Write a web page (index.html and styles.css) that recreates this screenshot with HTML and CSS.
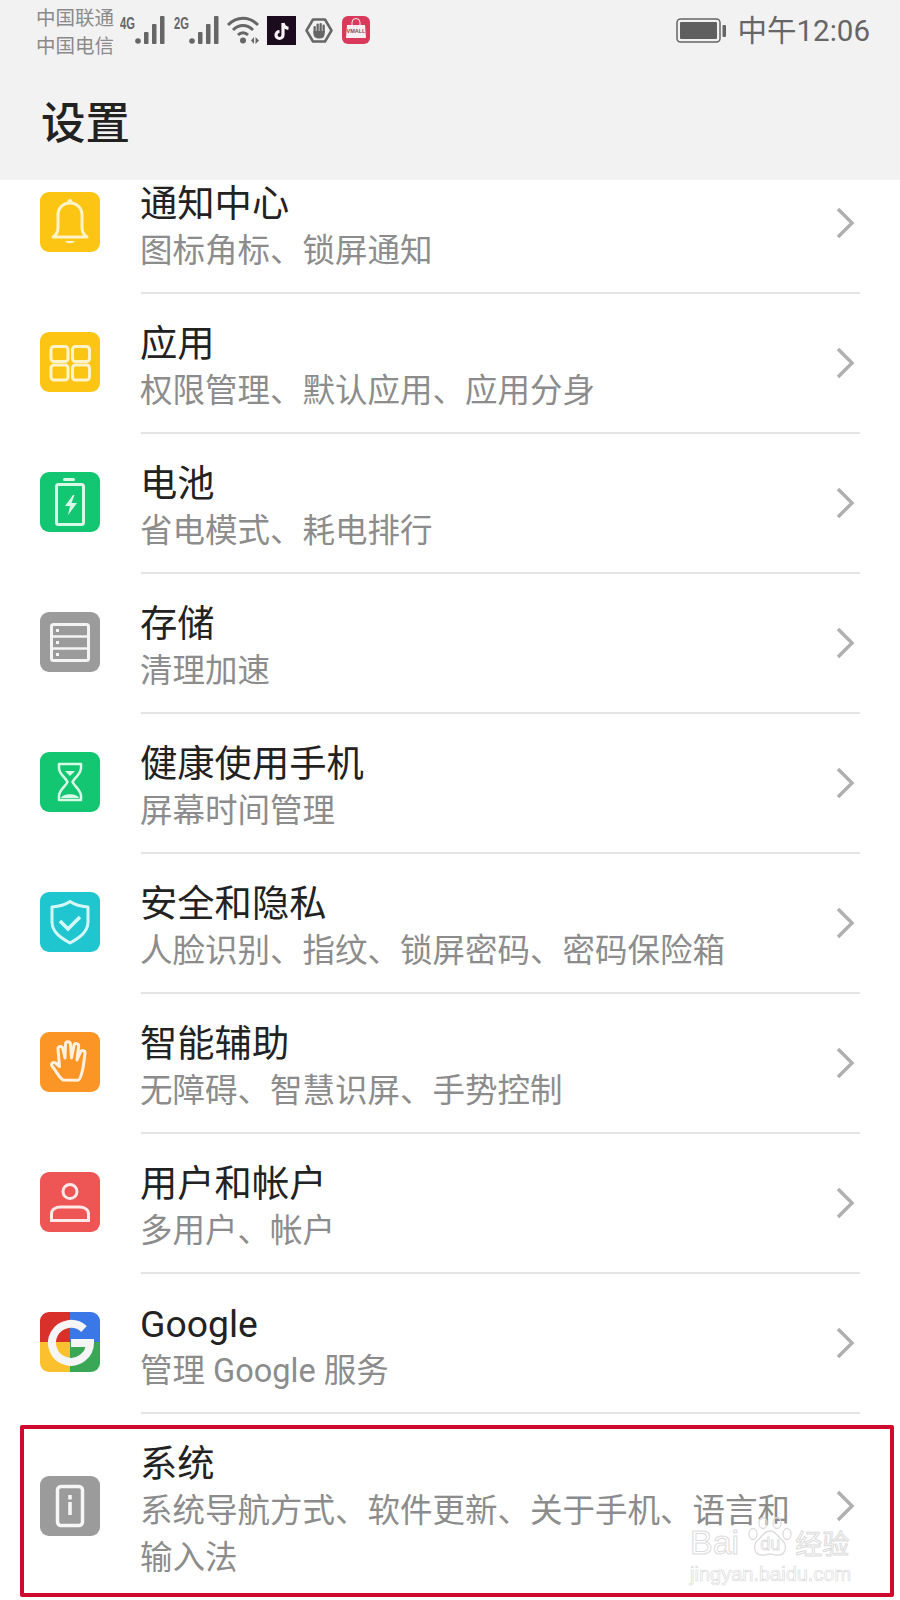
FILE: index.html
```html
<!DOCTYPE html>
<html lang="zh-CN">
<head>
    <meta charset="UTF-8">
    <meta name="viewport" content="width=device-width, initial-scale=1.0">
    <title>设置</title>
    <link rel="stylesheet" href="styles.css">
</head>
<body>
    <div class="phone">
        <header class="top-area">
            <div class="status-bar">
                <div class="carriers">
                    <span>中国联通</span>
                    <span>中国电信</span>
                </div>
                <div class="signal">
                    <span class="net-type">4G</span>
                    <svg width="30" height="28" viewBox="0 0 30 28"><g fill="#666"><circle cx="3" cy="25" r="2.800"/><rect x="9" y="16" width="4.500" height="12" rx="1"/><rect x="17" y="8" width="4.500" height="20" rx="1"/><rect x="25" y="0" width="4.500" height="28" rx="1"/></g></svg>
                </div>
                <div class="signal signal-two">
                    <span class="net-type">2G</span>
                    <svg width="30" height="28" viewBox="0 0 30 28"><g fill="#666"><circle cx="3" cy="25" r="2.800"/><rect x="9" y="16" width="4.500" height="12" rx="1"/><rect x="17" y="8" width="4.500" height="20" rx="1"/><rect x="25" y="0" width="4.500" height="28" rx="1"/></g></svg>
                </div>
                <svg class="wifi" width="34" height="28" viewBox="0 0 34 28">
                    <g fill="none" stroke="#666" stroke-width="3"><path d="M2 9C11 0 23 0 32 9"/><path d="M7 14C13 8 21 8 27 14"/><path d="M12 19C15 16 19 16 22 19"/></g>
                    <circle cx="17" cy="24.500" r="3" fill="#666"/>
                    <path d="M25 24.500l3-3.500v7zM29.500 21l3.500 3.500-3.500 3.500z" fill="#666"/>
                </svg>
                <svg class="tiktok" width="29" height="29" viewBox="0 0 29 29">
                    <rect width="29" height="29" fill="#1c0a1e"/>
                    <path d="M16 7v12a3.500 3.500 0 1 1-3.500-3.500M16 7c.5 3 2.500 5 5.500 5.300" fill="none" stroke="#f5f5f5" stroke-width="3.200"/>
                </svg>
                <svg class="stop" width="28" height="25" viewBox="0 0 28 25">
                    <path d="M8 1.500h12l6.500 11-6.500 11H8l-6.500-11z" fill="none" stroke="#666" stroke-width="2.500" stroke-linejoin="round"/>
                    <g fill="#666"><rect x="8.500" y="8" width="2.300" height="8" rx="1.100"/><rect x="11.500" y="5.500" width="2.300" height="10" rx="1.100"/><rect x="14.500" y="5" width="2.300" height="10" rx="1.100"/><rect x="17.500" y="6.500" width="2.300" height="9" rx="1.100"/><path d="M8.500 13h11.300l-.3 4c-.3 2.500-2 3.500-5 3.500-3.500 0-6-1.500-6-4.500z"/></g>
                </svg>
                <svg class="vmall" width="28" height="28" viewBox="0 0 28 28">
                    <rect width="28" height="28" rx="6" fill="#d93a5c"/>
                    <path d="M5 9h18l1 13H4z" fill="#f6eef0"/>
                    <path d="M10 10V6.500a4 4 0 0 1 8 0V10" fill="none" stroke="#f6eef0" stroke-width="1"/>
                    <text x="14" y="17" class="vmall-text">VMALL</text>
                </svg>
                <div class="status-right">
                    <svg class="battery" width="50" height="25" viewBox="0 0 50 25">
                        <rect x="1" y="1" width="43" height="23" rx="3.500" fill="none" stroke="#666" stroke-width="1.500"/>
                        <rect x="4" y="4" width="37" height="17" rx="1" fill="#5f5f5f"/>
                        <rect x="46.500" y="7" width="3.500" height="12" rx="1" fill="#666"/>
                    </svg>
                    <span class="clock">中午12:06</span>
                </div>
            </div>
            <h1 class="page-title">设置</h1>
        </header>

        <main class="settings-list">
            <a class="row">
                <span class="icon icon-yellow">
                    <svg width="60" height="60" viewBox="0 0 60 60"><path d="M30 11c-7 0-12 5-12 12v13c0 4-2 7-5 9h34c-3-2-5-5-5-9V23c0-7-5-12-12-12z" fill="none" stroke="#fff3c9" stroke-width="3" stroke-linejoin="round"/><path d="M25 49h10c-1 3-9 3-10 0z" fill="#fff3c9"/><circle cx="30" cy="9.500" r="2.500" fill="#fff3c9"/></svg>
                </span>
                <span class="row-text"><span class="row-title">通知中心</span><span class="row-sub">图标角标、锁屏通知</span></span>
                <svg class="chevron" width="20" height="34" viewBox="0 0 20 34"><path d="M3 3l14 14L3 31" fill="none" stroke="#b0b0b0" stroke-width="3.500"/></svg>
            </a>
            <a class="row">
                <span class="icon icon-yellow">
                    <svg width="60" height="60" viewBox="0 0 60 60"><g fill="none" stroke="#fff3c9" stroke-width="3"><rect x="11" y="14.500" width="17" height="15" rx="3"/><rect x="32.500" y="14.500" width="17" height="15" rx="3"/><rect x="11" y="33" width="17" height="15" rx="3"/><rect x="32.500" y="33" width="17" height="15" rx="3"/></g></svg>
                </span>
                <span class="row-text"><span class="row-title">应用</span><span class="row-sub">权限管理、默认应用、应用分身</span></span>
                <svg class="chevron" width="20" height="34" viewBox="0 0 20 34"><path d="M3 3l14 14L3 31" fill="none" stroke="#b0b0b0" stroke-width="3.500"/></svg>
            </a>
            <a class="row">
                <span class="icon icon-green">
                    <svg width="60" height="60" viewBox="0 0 60 60"><rect x="16.500" y="12.500" width="27" height="40" rx="2" fill="none" stroke="#d8fbe8" stroke-width="3"/><rect x="23" y="6" width="12" height="3" rx="1.500" fill="#d8fbe8"/><path d="M33 23l-8 11h5l-2 9 9-12h-5.500l3-8z" fill="#d8fbe8"/></svg>
                </span>
                <span class="row-text"><span class="row-title">电池</span><span class="row-sub">省电模式、耗电排行</span></span>
                <svg class="chevron" width="20" height="34" viewBox="0 0 20 34"><path d="M3 3l14 14L3 31" fill="none" stroke="#b0b0b0" stroke-width="3.500"/></svg>
            </a>
            <a class="row">
                <span class="icon icon-gray">
                    <svg width="60" height="60" viewBox="0 0 60 60"><rect x="11.500" y="12.500" width="37" height="36" rx="2" fill="none" stroke="#f4f4f4" stroke-width="3"/><path d="M12 24.500h36M12 36.500h36" stroke="#f4f4f4" stroke-width="2.500"/><g fill="#f4f4f4"><rect x="16" y="17" width="3" height="3"/><rect x="16" y="29" width="3" height="3"/><rect x="16" y="41" width="3" height="3"/></g></svg>
                </span>
                <span class="row-text"><span class="row-title">存储</span><span class="row-sub">清理加速</span></span>
                <svg class="chevron" width="20" height="34" viewBox="0 0 20 34"><path d="M3 3l14 14L3 31" fill="none" stroke="#b0b0b0" stroke-width="3.500"/></svg>
            </a>
            <a class="row">
                <span class="icon icon-green">
                    <svg width="60" height="60" viewBox="0 0 60 60"><path d="M19 12h22v4c0 6-6 9-8.500 14 2.500 5 8.500 8 8.500 14v4H19v-4c0-6 6-9 8.500-14C25 25 19 22 19 16z" fill="none" stroke="#d8fbe8" stroke-width="2.500" stroke-linejoin="round"/><path d="M25 19h10l-5 5zM21 46c2-5 16-5 18 0z" fill="#d8fbe8"/></svg>
                </span>
                <span class="row-text"><span class="row-title">健康使用手机</span><span class="row-sub">屏幕时间管理</span></span>
                <svg class="chevron" width="20" height="34" viewBox="0 0 20 34"><path d="M3 3l14 14L3 31" fill="none" stroke="#b0b0b0" stroke-width="3.500"/></svg>
            </a>
            <a class="row">
                <span class="icon icon-teal">
                    <svg width="60" height="60" viewBox="0 0 60 60"><path d="M30 9.500c5 3.500 11 5 18 5.500v15c0 10-9 16-18 21-9-5-18-11-18-21V15c7-.5 13-2 18-5.500z" fill="none" stroke="#d6f7f8" stroke-width="3" stroke-linejoin="round"/><path d="M20 29l8 8 12-12" fill="none" stroke="#d6f7f8" stroke-width="3.500"/></svg>
                </span>
                <span class="row-text"><span class="row-title">安全和隐私</span><span class="row-sub">人脸识别、指纹、锁屏密码、密码保险箱</span></span>
                <svg class="chevron" width="20" height="34" viewBox="0 0 20 34"><path d="M3 3l14 14L3 31" fill="none" stroke="#b0b0b0" stroke-width="3.500"/></svg>
            </a>
            <a class="row">
                <span class="icon icon-orange">
                    <svg width="60" height="60" viewBox="0 0 60 60"><path d="M23 48c-4-3-6-7-8-10l-3-4c-1.500-2 1-4.500 3.500-3l4 3.500L18 17c-.2-3 4-3.500 4.800-.5L25 26l.5-14c.2-3 4.500-3 5 0l1 14 2.500-12.500c.7-3 4.800-2.200 4.700.5L37 28l3.500-8c1.200-2.500 5-1.500 4.500 1.200-1 6-1 12-3 19-1 4-2 8-4 8z" fill="none" stroke="#fff1de" stroke-width="3" stroke-linejoin="round"/></svg>
                </span>
                <span class="row-text"><span class="row-title">智能辅助</span><span class="row-sub">无障碍、智慧识屏、手势控制</span></span>
                <svg class="chevron" width="20" height="34" viewBox="0 0 20 34"><path d="M3 3l14 14L3 31" fill="none" stroke="#b0b0b0" stroke-width="3.500"/></svg>
            </a>
            <a class="row">
                <span class="icon icon-red">
                    <svg width="60" height="60" viewBox="0 0 60 60"><circle cx="30" cy="19.500" r="7" fill="none" stroke="#ffe9e9" stroke-width="3"/><path d="M21 35h18c6 0 9.500 3 9.500 7v6.500h-37V42c0-4 3.500-7 9.500-7z" fill="none" stroke="#ffe9e9" stroke-width="3"/></svg>
                </span>
                <span class="row-text"><span class="row-title">用户和帐户</span><span class="row-sub">多用户、帐户</span></span>
                <svg class="chevron" width="20" height="34" viewBox="0 0 20 34"><path d="M3 3l14 14L3 31" fill="none" stroke="#b0b0b0" stroke-width="3.500"/></svg>
            </a>
            <a class="row">
                <span class="icon icon-google">
                    <svg width="60" height="60" viewBox="0 0 60 60">
                        <rect width="30" height="30" fill="#d9302c"/>
                        <rect x="30" width="30" height="30" fill="#3b78e7"/>
                        <rect y="30" width="30" height="30" fill="#fbc02d"/>
                        <rect x="30" y="30" width="30" height="30" fill="#3aa757"/>
                        <path d="M44 17a19 19 0 1 0 6 14H31" fill="none" stroke="#f5f5f5" stroke-width="8"/>
                    </svg>
                </span>
                <span class="row-text"><span class="row-title">Google</span><span class="row-sub">管理 Google 服务</span></span>
                <svg class="chevron" width="20" height="34" viewBox="0 0 20 34"><path d="M3 3l14 14L3 31" fill="none" stroke="#b0b0b0" stroke-width="3.500"/></svg>
            </a>
            <a class="row row-last">
                <span class="icon icon-gray">
                    <svg width="60" height="60" viewBox="0 0 60 60"><rect x="17.500" y="10.500" width="25" height="39" rx="3.500" fill="none" stroke="#f6f6f6" stroke-width="3.500"/><rect x="28.200" y="19" width="3.600" height="4.500" fill="#f6f6f6"/><rect x="28.200" y="26" width="3.600" height="13" fill="#f6f6f6"/></svg>
                </span>
                <span class="row-text"><span class="row-title">系统</span><span class="row-sub">系统导航方式、软件更新、关于手机、语言和输入法</span></span>
                <svg class="chevron" width="20" height="34" viewBox="0 0 20 34"><path d="M3 3l14 14L3 31" fill="none" stroke="#b0b0b0" stroke-width="3.500"/></svg>
            </a>
        </main>

        <div class="red-box"></div>
        <div class="watermark">
            <div class="wm-top">
                <span class="wm-bai">Bai</span>
                <div class="wm-paw">
                    <svg width="46" height="40" viewBox="0 0 46 40"><g fill="none" stroke="#dcdcdc" stroke-width="1.300"><ellipse cx="6" cy="17" rx="4" ry="5.500"/><ellipse cx="16" cy="6" rx="4" ry="5.500"/><ellipse cx="30" cy="6" rx="4" ry="5.500"/><ellipse cx="40" cy="17" rx="4" ry="5.500"/><path d="M23 14c-6 0-7 5-12 9-5 4-5 14 3 15 4 .5 6-1 9-1s5 1.500 9 1c8-1 8-11 3-15-5-4-6-9-12-9z"/></g></svg>
                    <span class="wm-du">du</span>
                </div>
                <span class="wm-cn">经验</span>
            </div>
            <div class="wm-url">jingyan.baidu.com</div>
        </div>
    </div>
</body>
</html>
```

FILE: styles.css
```css
/* General Reset */
* {
    margin: 0;
    padding: 0;
    box-sizing: border-box;
}

body {
    font-family: "Noto Sans CJK SC", "Noto Sans", sans-serif;
    background-color: #fff;
    color: #222;
}

.phone {
    position: relative;
    width: 900px;
    height: 1600px;
    overflow: hidden;
    background-color: #fff;
}

/* Status bar + title */
.top-area {
    position: relative;
    z-index: 2;
    height: 180px;
    background-color: #f2f2f2;
}

.status-bar {
    display: flex;
    align-items: flex-start;
    height: 62px;
    padding: 3px 30px 0 36px;
}

.carriers {
    display: flex;
    flex-direction: column;
    width: 84px;
    font-size: 19.500px;
    line-height: 28px;
    color: #8a8a8a;
}

.signal {
    display: flex;
    align-items: flex-start;
    margin-top: 13px;
}

.signal-two {
    margin-left: 9px;
}

.net-type {
    width: 15px;
    font-family: "Liberation Sans", sans-serif;
    font-size: 16px;
    font-weight: 700;
    line-height: 16px;
    color: #666;
    transform: scaleX(0.7);
    transform-origin: left top;
}

.wifi {
    margin: 13px 0 0 7px;
}

.tiktok {
    margin: 13px 0 0 7px;
}

.stop {
    margin: 15px 0 0 9px;
}

.vmall {
    margin: 13px 0 0 9px;
}

.vmall-text {
    font-family: "Liberation Sans", sans-serif;
    font-size: 5.500px;
    font-weight: 700;
    fill: #8a4a58;
    text-anchor: middle;
}

.status-right {
    display: flex;
    align-items: flex-start;
    margin-left: auto;
}

.battery {
    margin: 15px 12px 0 0;
}

.clock {
    font-family: "Roboto", "Noto Sans CJK SC", sans-serif;
    font-size: 29.500px;
    line-height: 56px;
    color: #666;
}

.page-title {
    padding: 28px 0 0 41px;
    font-size: 44.500px;
    font-weight: 500;
    line-height: 60px;
    color: #222;
}

/* Settings rows */
.settings-list {
    margin-top: -27px;
}

.row {
    display: flex;
    align-items: center;
    height: 140px;
    padding-left: 40px;
    padding-right: 60px;
    position: relative;
}

.row::after {
    content: "";
    position: absolute;
    left: 141px;
    right: 40px;
    bottom: -1px;
    height: 2px;
    background-color: #e4e4e4;
}

.row-last {
    height: 186px;
}

.row-last::after {
    display: none;
}

.icon {
    flex: none;
    width: 60px;
    height: 60px;
    margin-top: -2px;
    border-radius: 9px;
    overflow: hidden;
}

.row-last .icon {
    margin-top: 0;
}

.icon svg {
    display: block;
}

.icon-yellow { background-color: #fdc513; }
.icon-green { background-color: #12c672; }
.icon-gray { background-color: #9b9b9b; }
.icon-teal { background-color: #1fc6cf; }
.icon-orange { background-color: #fb9526; }
.icon-red { background-color: #ee5555; }

.row-text {
    flex: 1;
    display: flex;
    flex-direction: column;
    margin: 0 20px 0 40px;
    padding-top: 9px;
    min-width: 0;
}

.row-title {
    font-family: "Roboto", "Noto Sans CJK SC", sans-serif;
    font-size: 37.300px;
    line-height: 48px;
    color: #222;
}

.row-sub {
    font-family: "Roboto", "Noto Sans CJK SC", sans-serif;
    font-size: 32.500px;
    line-height: 47px;
    color: #8c8c8c;
}

.chevron {
    flex: none;
    margin-left: 2px;
    margin-right: -15px;
}

/* Red highlight over the last row */
.red-box {
    position: absolute;
    left: 20px;
    top: 1425px;
    width: 874px;
    height: 172px;
    border: 4px solid #cf0a2c;
    border-radius: 2px;
}

/* Baidu watermark */
.watermark {
    position: absolute;
    left: 690px;
    top: 1517px;
    width: 170px;
    color: transparent;
}

.wm-top {
    display: flex;
    align-items: flex-end;
    height: 40px;
    font-family: "Liberation Sans", sans-serif;
    -webkit-text-stroke: 1px #dcdcdc;
}

.wm-bai {
    font-size: 34px;
    line-height: 30px;
}

.wm-paw {
    position: relative;
    flex: none;
    width: 46px;
    height: 40px;
    margin-left: 8px;
}

.wm-paw svg {
    display: block;
}

.wm-du {
    position: absolute;
    left: 13px;
    top: 17px;
    font-size: 18px;
    line-height: 20px;
    -webkit-text-stroke: 0.800px #dcdcdc;
}

.wm-cn {
    margin-left: 2px;
    font-family: "Noto Sans CJK SC", sans-serif;
    font-size: 27px;
    line-height: 28px;
}

.wm-url {
    margin-top: 6px;
    font-family: "Liberation Sans", sans-serif;
    font-size: 20px;
    line-height: 22px;
    -webkit-text-stroke: 0.700px #dcdcdc;
    white-space: nowrap;
}
```
